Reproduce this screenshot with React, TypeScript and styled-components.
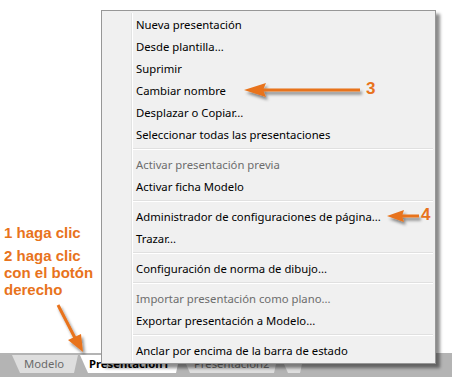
import * as React from 'react';
import styled, { createGlobalStyle } from 'styled-components';

const ORANGE = '#e8731c';

const GlobalStyle = createGlobalStyle`
  html, body {
    margin: 0;
    padding: 0;
    background: #ffffff;
  }
  body {
    font-family: 'Noto Sans', 'Open Sans', sans-serif;
  }
`;

const Page = styled.div`
  position: relative;
  width: 452px;
  height: 392px;
  overflow: hidden;
  background: #ffffff;
  display: flex;
  flex-direction: column;
  justify-content: flex-end;
`;

const Notes = styled.div`
  position: absolute;
  left: 4px;
  top: 224px;
  display: flex;
  flex-direction: column;
  gap: 6px;
  font-family: 'Liberation Sans', Arial, sans-serif;
  font-weight: bold;
  font-size: 15px;
  line-height: 17px;
  color: ${ORANGE};
`;

const StatusBar = styled.div`
  height: 24px;
  margin-bottom: 15px;
  background: #b4b4b4;
  display: flex;
  align-items: flex-end;
  padding-left: 12px;
  gap: 2px;
`;

interface TabProps {
  active?: boolean;
  width: number;
}

const Tab = styled.div<TabProps>`
  width: ${({ width }) => width}px;
  height: 18px;
  margin-bottom: 4px;
  box-sizing: border-box;
  padding-left: ${({ active }) => (active ? 9 : 12)}px;
  background: ${({ active }) => (active ? '#ffffff' : '#dedede')};
  clip-path: polygon(0 0, 100% 0, calc(100% - 4px) 100%, 8px 100%);
  border-radius: 0 0 4px 4px;
  font-family: 'Noto Sans', 'Open Sans', sans-serif;
  font-size: 11.3px;
  line-height: 18px;
  font-weight: ${({ active }) => (active ? 'bold' : 'normal')};
  color: ${({ active }) => (active ? '#000000' : '#6a6a6a')};
  white-space: nowrap;
`;

const Menu = styled.div`
  position: absolute;
  left: 101px;
  top: 10px;
  width: 335px;
  box-sizing: border-box;
  border: 1px solid #979797;
  background: #f0f0f0;
  padding: 2px 2px 2px 0;
  box-shadow: 4px 4px 3px rgba(0, 0, 0, 0.45);
  display: flex;
  flex-direction: column;
  &::before {
    content: '';
    position: absolute;
    left: 29px;
    top: 2px;
    bottom: 2px;
    width: 1px;
    background: #e2e3e3;
    border-right: 1px solid #ffffff;
  }
`;

interface ItemProps {
  disabled?: boolean;
}

const Item = styled.div<ItemProps>`
  height: 22px;
  padding-left: 34px;
  display: flex;
  align-items: center;
  font-size: 11.3px;
  color: ${({ disabled }) => (disabled ? '#6d6d6d' : '#000000')};
  white-space: nowrap;
`;

const Separator = styled.div`
  height: 8px;
  margin-left: 31px;
  display: flex;
  align-items: center;
  &::after {
    content: '';
    flex: 1;
    height: 1px;
    background: #e0e0e0;
    border-bottom: 1px solid #ffffff;
  }
`;

const Callout = styled.svg`
  position: absolute;
  overflow: visible;
`;

const Num = styled.span`
  position: absolute;
  font-family: 'Liberation Sans', Arial, sans-serif;
  font-weight: bold;
  font-size: 17px;
  color: ${ORANGE};
`;

type Entry = { label: string; disabled?: boolean } | 'sep';

const entries: Entry[] = [
  { label: 'Nueva presentación' },
  { label: 'Desde plantilla...' },
  { label: 'Suprimir' },
  { label: 'Cambiar nombre' },
  { label: 'Desplazar o Copiar...' },
  { label: 'Seleccionar todas las presentaciones' },
  'sep',
  { label: 'Activar presentación previa', disabled: true },
  { label: 'Activar ficha Modelo' },
  'sep',
  { label: 'Administrador de configuraciones de página...' },
  { label: 'Trazar...' },
  'sep',
  { label: 'Configuración de norma de dibujo...' },
  'sep',
  { label: 'Importar presentación como plano...', disabled: true },
  { label: 'Exportar presentación a Modelo...' },
  'sep',
  { label: 'Anclar por encima de la barra de estado' },
];

function Shadow({ id }: { id: string }) {
  return (
    <defs>
      <filter id={id} x="-20%" y="-50%" width="140%" height="250%">
        <feDropShadow dx="2" dy="3" stdDeviation="1.5" floodColor="#000" floodOpacity="0.45" />
      </filter>
    </defs>
  );
}

export default function App() {
  return (
    <Page>
      <GlobalStyle />
      <Notes>
        <div>1 haga clic</div>
        <div>
          2 haga clic
          <br />
          con el botón
          <br />
          derecho
        </div>
      </Notes>

      <Callout style={{ left: 50, top: 300 }} width="40" height="56">
        <Shadow id="s1" />
        <g filter="url(#s1)">
          <line x1="8" y1="5" x2="25" y2="38" stroke={ORANGE} strokeWidth="3" />
          <polygon points="33,52 18,40 31,34" fill={ORANGE} />
        </g>
      </Callout>

      <StatusBar>
        <Tab width={66}>Modelo</Tab>
        <Tab width={100} active>
          Presentación1
        </Tab>
        <Tab width={96}>Presentación2</Tab>
        <Tab width={24} />
      </StatusBar>

      <Menu>
        {entries.map((e, i) =>
          e === 'sep' ? (
            <Separator key={i} />
          ) : (
            <Item key={i} disabled={e.disabled}>
              {e.label}
            </Item>
          ),
        )}
      </Menu>

      <Callout style={{ left: 244, top: 82 }} width="118" height="16">
        <Shadow id="s3" />
        <g filter="url(#s3)">
          <line x1="16" y1="8" x2="116" y2="8" stroke={ORANGE} strokeWidth="3" />
          <polygon points="0,8 22,1 19,8 22,15" fill={ORANGE} />
        </g>
      </Callout>
      <Num style={{ left: 366, top: 79 }}>3</Num>

      <Callout style={{ left: 387, top: 208 }} width="34" height="16">
        <Shadow id="s4" />
        <g filter="url(#s4)">
          <line x1="12" y1="8" x2="32" y2="8" stroke={ORANGE} strokeWidth="3" />
          <polygon points="0,8 17,2 15,8 17,14" fill={ORANGE} />
        </g>
      </Callout>
      <Num style={{ left: 421, top: 205 }}>4</Num>
    </Page>
  );
}
